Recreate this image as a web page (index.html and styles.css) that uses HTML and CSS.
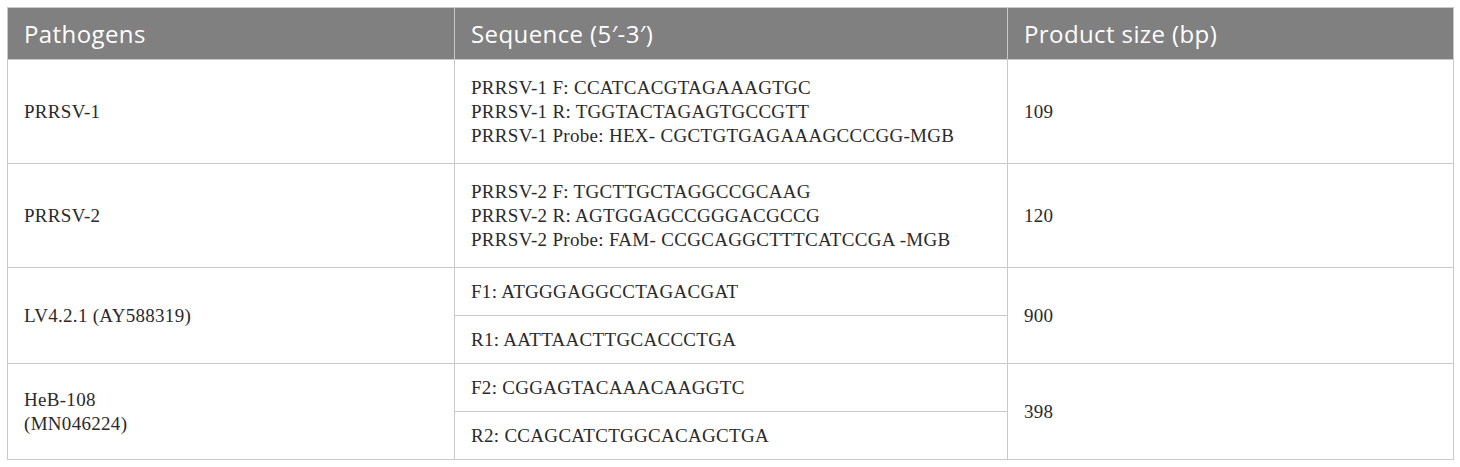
FILE: index.html
```html
<!DOCTYPE html>
<html>
<head>
<meta charset="utf-8">
<link rel="stylesheet" href="styles.css">
</head>
<body>
<div class="wrap">
<table class="primers">
  <colgroup>
    <col class="c1"><col class="c2"><col class="c3">
  </colgroup>
  <thead>
    <tr><th>Pathogens</th><th>Sequence (5′-3′)</th><th>Product size (bp)</th></tr>
  </thead>
  <tbody>
    <tr class="multi">
      <td>PRRSV-1</td>
      <td>PRRSV-1 F: CCATCACGTAGAAAGTGC<br>PRRSV-1 R: TGGTACTAGAGTGCCGTT<br>PRRSV-1 Probe: HEX- CGCTGTGAGAAAGCCCGG-MGB</td>
      <td>109</td>
    </tr>
    <tr class="multi">
      <td>PRRSV-2</td>
      <td>PRRSV-2 F: TGCTTGCTAGGCCGCAAG<br>PRRSV-2 R: AGTGGAGCCGGGACGCCG<br>PRRSV-2 Probe: FAM- CCGCAGGCTTTCATCCGA -MGB</td>
      <td>120</td>
    </tr>
    <tr class="single">
      <td rowspan="2">LV4.2.1 (AY588319)</td>
      <td>F1: ATGGGAGGCCTAGACGAT</td>
      <td rowspan="2">900</td>
    </tr>
    <tr class="single">
      <td>R1: AATTAACTTGCACCCTGA</td>
    </tr>
    <tr class="single">
      <td rowspan="2">HeB-108<br>(MN046224)</td>
      <td>F2: CGGAGTACAAACAAGGTC</td>
      <td rowspan="2">398</td>
    </tr>
    <tr class="single">
      <td>R2: CCAGCATCTGGCACAGCTGA</td>
    </tr>
  </tbody>
</table>
</div>
</body>
</html>
```

FILE: styles.css
```css
html, body {
  margin: 0;
  padding: 0;
  background: #ffffff;
}
.wrap {
  padding: 7px;
}
.primers {
  width: 1446px;
  border-collapse: collapse;
  table-layout: fixed;
}
.c1 { width: 447px; }
.c2 { width: 553px; }
.c3 { width: 446px; }
.primers th {
  background: #7f807f;
  color: #ffffff;
  font-family: "Open Sans", "Noto Sans", sans-serif;
  font-weight: 400;
  font-size: 24px;
  letter-spacing: 0.4px;
  line-height: 30px;
  text-align: left;
  padding: 11px 16px 10px;
  border: 1px solid #c9c9c9;
}
.primers td {
  font-family: "Liberation Serif", "Times New Roman", serif;
  font-size: 19px;
  letter-spacing: 0.3px;
  line-height: 24px;
  color: #2a2a2a;
  text-align: left;
  vertical-align: middle;
  border: 1px solid #c9c9c9;
  padding: 12px 16px 11px;
}
.primers .multi td {
  padding: 16px 16px 15px;
}
```
